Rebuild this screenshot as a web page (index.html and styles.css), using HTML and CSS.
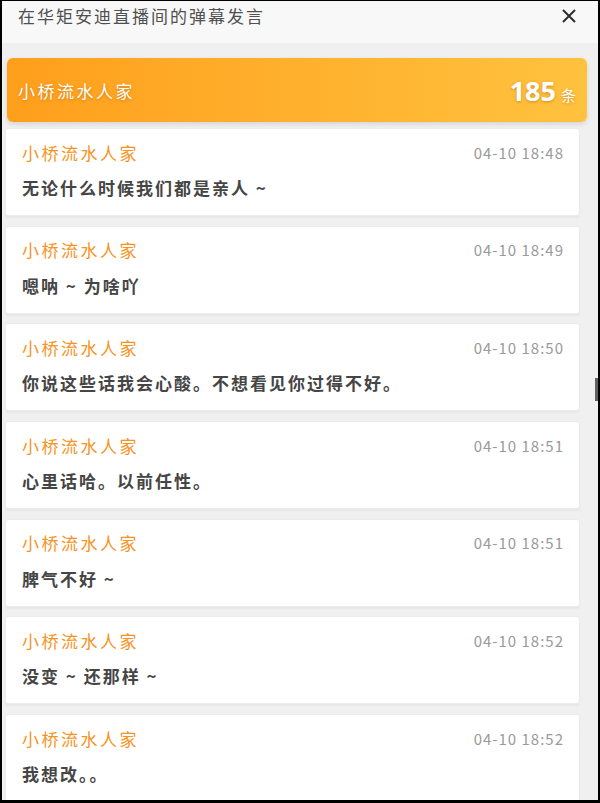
FILE: index.html
```html
<!DOCTYPE html>
<html lang="zh-CN">
<head>
<meta charset="utf-8">
<title>弹幕发言</title>
<link rel="stylesheet" href="styles.css">
</head>
<body>
<div class="frame">
  <div class="header">
    <div class="title">在华矩安迪直播间的弹幕发言</div>
    <svg class="close" width="16" height="16" viewBox="0 0 16 16"><path d="M2 2 L14 14 M14 2 L2 14" stroke="#2e2e2e" stroke-width="2" fill="none"/></svg>
  </div>
  <div class="banner">
    <span class="banner-name">小桥流水人家</span>
    <span class="count"><b>185</b><small>条</small></span>
  </div>
  <div class="list">
    <div class="card"><div class="row"><span class="name">小桥流水人家</span><span class="time">04-10 18:48</span></div><div class="msg">无论什么时候我们都是亲人 ~</div></div>
    <div class="card"><div class="row"><span class="name">小桥流水人家</span><span class="time">04-10 18:49</span></div><div class="msg">嗯呐 ~ 为啥吖</div></div>
    <div class="card"><div class="row"><span class="name">小桥流水人家</span><span class="time">04-10 18:50</span></div><div class="msg">你说这些话我会心酸。不想看见你过得不好。</div></div>
    <div class="card"><div class="row"><span class="name">小桥流水人家</span><span class="time">04-10 18:51</span></div><div class="msg">心里话哈。以前任性。</div></div>
    <div class="card"><div class="row"><span class="name">小桥流水人家</span><span class="time">04-10 18:51</span></div><div class="msg">脾气不好 ~</div></div>
    <div class="card"><div class="row"><span class="name">小桥流水人家</span><span class="time">04-10 18:52</span></div><div class="msg">没变 ~ 还那样 ~</div></div>
    <div class="card"><div class="row"><span class="name">小桥流水人家</span><span class="time">04-10 18:52</span></div><div class="msg">我想改。。</div></div>
  </div>
  <div class="thumb"></div>
</div>
</body>
</html>
```
FILE: styles.css
```css
html, body {
  margin: 0;
  padding: 0;
  background: #000;
}
body {
  font-family: "Noto Sans CJK SC", "Noto Sans", sans-serif;
}
.frame {
  position: relative;
  margin: 1px 2px 0 2px;
  width: 596px;
  height: 799px;
  overflow: hidden;
  background: #f0f0f0;
}
.header {
  height: 42px;
  background: #f8f8f8;
  display: flex;
  justify-content: space-between;
  align-items: flex-start;
  padding: 0 21px 0 16px;
}
.title {
  font-size: 17px;
  letter-spacing: 2px;
  line-height: 30px;
  color: #505050;
}
.close {
  margin-top: 7px;
}
.banner {
  margin: 15px 11px 0 5px;
  height: 64px;
  border-radius: 6px;
  background: linear-gradient(to right, #ff9f1c, #ffc23e);
  box-shadow: 0 2px 5px rgba(0,0,0,0.12);
  display: flex;
  align-items: center;
  justify-content: space-between;
  padding: 0 11px;
  color: #fff;
  text-shadow: 0 1px 3px rgba(150,80,0,0.45);
}
.banner-name {
  font-size: 17px;
  letter-spacing: 2.5px;
}
.count b {
  font-family: "Open Sans", "Noto Sans", sans-serif;
  font-size: 27px;
  font-weight: 700;
}
.count small {
  font-size: 15px;
  margin-left: 5px;
}
.list {
  margin: 6px 0 0 3px;
  width: 575px;
  display: flex;
  flex-direction: column;
  gap: 9.7px;
}
.card {
  height: 88px;
  box-sizing: border-box;
  background: #fff;
  border: 1px solid #ebebeb;
  border-radius: 3px;
  box-shadow: 0 2px 2px rgba(0,0,0,0.04);
  padding: 11px 16px 0 16px;
}
.row {
  display: flex;
  justify-content: space-between;
  align-items: center;
  height: 24px;
}
.name {
  font-size: 17px;
  letter-spacing: 2.5px;
  color: #f7931e;
}
.time {
  font-size: 15px;
  letter-spacing: 1px;
  margin-right: -1px;
  color: #9a9a9a;
}
.msg {
  margin-top: 12px;
  line-height: 24px;
  font-size: 17px;
  letter-spacing: 2px;
  font-weight: 700;
  color: #454545;
}
.thumb {
  position: absolute;
  right: 0;
  top: 377px;
  width: 3px;
  height: 23px;
  background: #606060;
}
```
